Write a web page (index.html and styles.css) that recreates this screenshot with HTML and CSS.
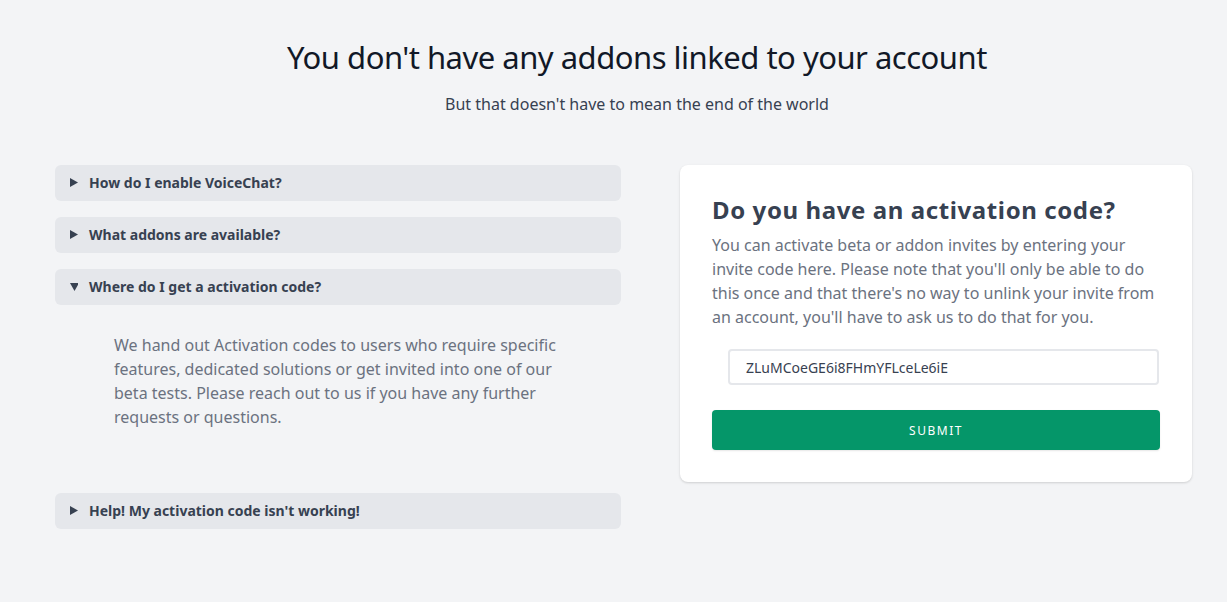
FILE: index.html
```html
<!DOCTYPE html>
<html lang="en">
<head>
<meta charset="utf-8">
<title>Addons</title>
<link rel="stylesheet" href="styles.css">
</head>
<body>
<main class="page">
  <header class="hero">
    <h1 class="hero-title">You don't have any addons linked to your account</h1>
    <p class="hero-sub">But that doesn't have to mean the end of the world</p>
  </header>
  <div class="columns">
    <section class="faq">
      <details class="faq-item">
        <summary class="faq-q"><svg class="tri" width="8" height="9" viewBox="0 0 8 9"><path d="M0 0 L8 4.5 L0 9 Z" fill="#374151"/></svg>How do I enable VoiceChat?</summary>
      </details>
      <details class="faq-item">
        <summary class="faq-q"><svg class="tri" width="8" height="9" viewBox="0 0 8 9"><path d="M0 0 L8 4.5 L0 9 Z" fill="#374151"/></svg>What addons are available?</summary>
      </details>
      <details class="faq-item" open>
        <summary class="faq-q"><svg class="tri" width="8" height="9" viewBox="0 0 8 9"><path d="M0 1 L9 1 L4.5 9 Z" fill="#374151"/></svg>Where do I get a activation code?</summary>
        <div class="faq-a">
          <p>We hand out Activation codes to users who require specific features, dedicated solutions or get invited into one of our beta tests. Please reach out to us if you have any further requests or questions.</p>
        </div>
      </details>
      <details class="faq-item">
        <summary class="faq-q"><svg class="tri" width="8" height="9" viewBox="0 0 8 9"><path d="M0 0 L8 4.5 L0 9 Z" fill="#374151"/></svg>Help! My activation code isn't working!</summary>
      </details>
    </section>
    <section class="card">
      <h2 class="card-title">Do you have an activation code?</h2>
      <p class="card-text">You can activate beta or addon invites by entering your invite code here. Please note that you'll only be able to do this once and that there's no way to unlink your invite from an account, you'll have to ask us to do that for you.</p>
      <input class="code-input" type="text" value="ZLuMCoeGE6i8FHmYFLceLe6iE">
      <button class="submit" type="button">SUBMIT</button>
    </section>
  </div>
</main>
</body>
</html>
```
FILE: styles.css
```css
* { box-sizing: border-box; }
html, body {
  margin: 0;
  padding: 0;
  background: #f3f4f6;
  font-family: "Noto Sans", "Open Sans", sans-serif;
  color: #374151;
}
.page {
  padding-top: 37px;
}
.hero {
  text-align: center;
  padding-left: 47px;
}
.hero-title {
  margin: 0;
  font-size: 31px;
  line-height: 40px;
  font-weight: 400;
  letter-spacing: -0.5px;
  color: #111827;
}
.hero-sub {
  margin: 15px 0 0;
  font-size: 16px;
  line-height: 24px;
  color: #374151;
}
.columns {
  display: flex;
  align-items: flex-start;
  margin-top: 49px;
  padding-left: 55px;
  gap: 59px;
}
.faq {
  width: 566px;
  display: flex;
  flex-direction: column;
  gap: 16px;
}
.faq-item { margin: 0; }
.faq-q {
  list-style: none;
  display: flex;
  align-items: center;
  height: 36px;
  padding-left: 15px;
  padding-bottom: 1px;
  background: #e5e7eb;
  border-radius: 6px;
  font-size: 14px;
  font-weight: 700;
  color: #374151;
  cursor: pointer;
}
.faq-q::-webkit-details-marker { display: none; }
.tri {
  width: 8px;
  height: 9px;
  margin-right: 11px;
  flex: none;
}
.faq-a {
  padding: 28px 60px 48px 59px;
}
.faq-a p {
  margin: 0;
  font-size: 16px;
  line-height: 24px;
  color: #6b7280;
}
.card {
  width: 512px;
  background: #fff;
  border-radius: 8px;
  padding: 31px 32px 32px 32px;
  box-shadow: 0 1px 3px rgba(0,0,0,0.1), 0 1px 2px rgba(0,0,0,0.06);
}
.card-title {
  margin: 0;
  font-size: 24px;
  line-height: 28px;
  font-weight: 700;
  letter-spacing: 0.6px;
  color: #374151;
}
.card-text {
  margin: 9px 0 0;
  font-size: 16px;
  line-height: 24px;
  color: #6b7280;
}
.code-input {
  display: block;
  margin: 20px 0 0 16px;
  width: 431px;
  height: 36px;
  border: 2px solid #e5e7eb;
  border-radius: 4px;
  padding: 0 16px;
  font-family: inherit;
  font-size: 14px;
  color: #374151;
  background: #fff;
  outline: none;
}
.submit {
  display: block;
  margin-top: 25px;
  width: 448px;
  height: 40px;
  padding-bottom: 1px;
  border: none;
  border-radius: 4px;
  background: #059669;
  color: #fff;
  font-family: inherit;
  font-size: 12px;
  letter-spacing: 1.5px;
  box-shadow: 0 1px 2px rgba(0,0,0,0.1);
  cursor: pointer;
}
```
